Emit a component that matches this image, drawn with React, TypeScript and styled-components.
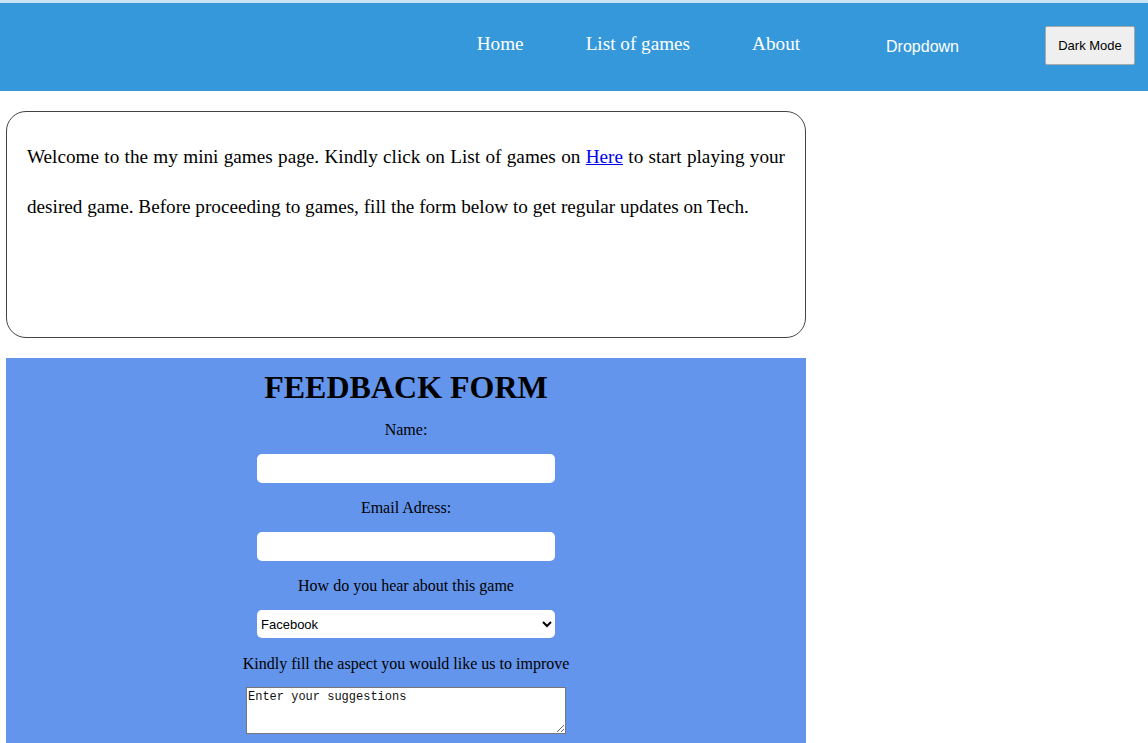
import React from "react";
import styled, { createGlobalStyle } from "styled-components";

const Global = createGlobalStyle`
  html, body { margin: 0; padding: 0; background: #fff; }
  body { font-family: "Liberation Serif", "Times New Roman", serif; color: #000; }
`;

const Header = styled.header`
  height: 88px;
  border-top: 3px solid #c9e3f5;
  background: #3598db;
  display: flex;
  align-items: center;
  justify-content: flex-end;
  padding-right: 13px;
`;

const NavLink = styled.a`
  color: #fff;
  text-decoration: none;
  font-family: "Liberation Serif", "Times New Roman", serif;
  font-size: 19.2px;
  padding: 0 31px;
  margin-bottom: 6px;
`;

const DropdownBtn = styled.span`
  color: #fff;
  font-family: "Liberation Sans", Arial, sans-serif;
  font-size: 16px;
  margin-left: 55px;
  margin-right: 86px;
`;

const ModeButton = styled.button`
  width: 90px;
  height: 39px;
  background: #efefef;
  border: 1px solid #a9a9a9;
  border-radius: 2px;
  font-family: "Liberation Sans", Arial, sans-serif;
  font-size: 13px;
  color: #000;
  padding: 0;
  margin-bottom: 4px;
`;

const Main = styled.main`
  padding: 20px 6px 0;
  width: 800px;
  display: flex;
  flex-direction: column;
  gap: 20px;
`;

const Card = styled.section`
  box-sizing: border-box;
  height: 227px;
  border: 1px solid #444;
  border-radius: 20px;
  padding: 20px;
  font-size: 19.2px;
  line-height: 50px;
  text-align: justify;
  p { margin: 0; }
  a { color: #0000ee; text-decoration: underline; }
`;

const FormPanel = styled.form`
  background: #6495ed;
  padding: 11px 0 20px;
  display: flex;
  flex-direction: column;
  align-items: center;
`;

const Title = styled.h1`
  margin: 0 0 15px;
  font-size: 32px;
  line-height: 37px;
  font-weight: bold;
`;

const FieldLabel = styled.label<{ $gap?: number }>`
  font-size: 16px;
  line-height: 18px;
  margin-bottom: ${(p) => p.$gap ?? 15}px;
`;

const TextInput = styled.input`
  box-sizing: border-box;
  width: 298px;
  height: 29px;
  border: none;
  border-radius: 5px;
  background: #fff;
  margin-bottom: 16px;
`;

const Select = styled.select`
  box-sizing: border-box;
  width: 298px;
  height: 28px;
  border: none;
  border-radius: 5px;
  background: #fff;
  font-family: "Liberation Sans", Arial, sans-serif;
  font-size: 13px;
  color: #000;
  padding: 0;
  margin-bottom: 17px;
`;

const TextArea = styled.textarea`
  box-sizing: border-box;
  width: 320px;
  height: 47px;
  border: 1px solid #767676;
  font-family: "Liberation Mono", "Courier New", monospace;
  font-size: 12px;
  padding: 2px 1px;
  &::placeholder { color: #111; opacity: 1; }
`;

export default function App() {
  return (
    <>
      <Global />
      <Header>
        <NavLink href="#">Home</NavLink>
        <NavLink href="#">List of games</NavLink>
        <NavLink href="#">About</NavLink>
        <DropdownBtn>Dropdown</DropdownBtn>
        <ModeButton type="button">Dark Mode</ModeButton>
      </Header>
      <Main>
        <Card>
          <p>
            Welcome to the my mini games page. Kindly click on List of games on{" "}
            <a href="#">Here</a> to start playing your desired game. Before proceeding to
            games, fill the form below to get regular updates on Tech.
          </p>
        </Card>
        <FormPanel onSubmit={(e) => e.preventDefault()}>
          <Title>FEEDBACK FORM</Title>
          <FieldLabel htmlFor="name">Name:</FieldLabel>
          <TextInput id="name" type="text" />
          <FieldLabel htmlFor="email">Email Adress:</FieldLabel>
          <TextInput id="email" type="email" />
          <FieldLabel htmlFor="hear">How do you hear about this game</FieldLabel>
          <Select id="hear" defaultValue="Facebook">
            <option>Facebook</option>
            <option>Twitter</option>
            <option>Instagram</option>
            <option>Friends</option>
          </Select>
          <FieldLabel htmlFor="improve" $gap={14}>
            Kindly fill the aspect you would like us to improve
          </FieldLabel>
          <TextArea id="improve" placeholder="Enter your suggestions" />
        </FormPanel>
      </Main>
    </>
  );
}
